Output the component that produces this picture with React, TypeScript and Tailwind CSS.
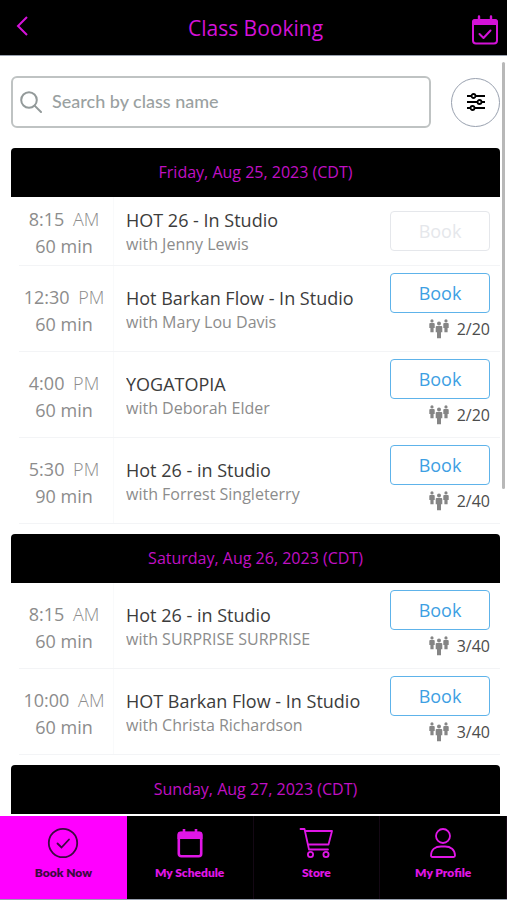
import React, { useState } from 'react';

interface ClassItem {
  id: number;
  time: string;
  period: string;
  duration: string;
  title: string;
  teacher: string;
  spots?: string;
}

interface Day {
  label: string;
  classes: ClassItem[];
}

const days: Day[] = [
  {
    label: 'Friday, Aug 25, 2023 (CDT)',
    classes: [
      { id: 1, time: '8:15', period: 'AM', duration: '60 min', title: 'HOT 26 - In Studio', teacher: 'Jenny Lewis' },
      { id: 2, time: '12:30', period: 'PM', duration: '60 min', title: 'Hot Barkan Flow - In Studio', teacher: 'Mary Lou Davis', spots: '2/20' },
      { id: 3, time: '4:00', period: 'PM', duration: '60 min', title: 'YOGATOPIA', teacher: 'Deborah Elder', spots: '2/20' },
      { id: 4, time: '5:30', period: 'PM', duration: '90 min', title: 'Hot 26 - in Studio', teacher: 'Forrest Singleterry', spots: '2/40' },
    ],
  },
  {
    label: 'Saturday, Aug 26, 2023 (CDT)',
    classes: [
      { id: 5, time: '8:15', period: 'AM', duration: '60 min', title: 'Hot 26 - in Studio', teacher: 'SURPRISE SURPRISE', spots: '3/40' },
      { id: 6, time: '10:00', period: 'AM', duration: '60 min', title: 'HOT Barkan Flow - In Studio', teacher: 'Christa Richardson', spots: '3/40' },
    ],
  },
  { label: 'Sunday, Aug 27, 2023 (CDT)', classes: [] },
];

const CalendarCheckIcon = () => (
  <svg width="28" height="32" viewBox="0 0 28 32" fill="none" stroke="currentColor" aria-hidden="true">
    <rect x="2" y="6" width="24" height="23.500" rx="3" strokeWidth="2" />
    <path d="M1 11V8a3 3 0 0 1 3-3h20a3 3 0 0 1 3 3v3z" fill="currentColor" stroke="none" />
    <path d="M8 2.500v4M20 2.500v4" strokeWidth="2.400" strokeLinecap="round" />
    <path d="M8.500 20l4 4 7-7.500" strokeWidth="2" strokeLinecap="round" strokeLinejoin="round" />
  </svg>
);

const SearchIcon = () => (
  <svg width="22" height="22" viewBox="0 0 22 22" fill="none" stroke="currentColor" strokeWidth="2" aria-hidden="true">
    <circle cx="9" cy="9" r="7.800" />
    <path d="M14.600 14.600L21 21" strokeLinecap="round" />
  </svg>
);

const FilterIcon = () => (
  <svg width="18" height="18" viewBox="0 0 18 18" fill="white" stroke="currentColor" strokeWidth="1.800" aria-hidden="true">
    <path d="M0 3h18M0 9h18M0 15h18" />
    <circle cx="6.500" cy="3" r="2" />
    <circle cx="12.500" cy="9" r="2" />
    <circle cx="5.500" cy="15" r="2" />
  </svg>
);

const PeopleIcon = () => (
  <svg width="20" height="20" viewBox="0 0 20 20" fill="currentColor" aria-hidden="true">
    <circle cx="3" cy="1.900" r="1.600" />
    <path d="M1.200 4h3.600q.9 0 .9.900v4H4.600v4.300H1.400V8.900H.3v-4q0-.9.900-.9z" />
    <circle cx="17" cy="1.900" r="1.600" />
    <path d="M15.200 4h3.600q.9 0 .9.900v4h-1.100v4.300h-3.200V8.900h-1.100v-4q0-.9.900-.9z" />
    <circle cx="10" cy="4.400" r="2" />
    <path d="M7.800 7h4.400q1.100 0 1.100 1.100v5.200H12V19.300H8v-6H6.700V8.100Q6.700 7 7.800 7z" />
  </svg>
);

const BookIcon = () => (
  <svg width="32" height="32" viewBox="0 0 32 32" fill="none" stroke="currentColor" strokeWidth="1.800" aria-hidden="true">
    <circle cx="16" cy="16" r="14.200" />
    <path d="M10.500 16.500l4 4 7.500-8" strokeLinecap="round" />
  </svg>
);

const ScheduleIcon = () => (
  <svg width="32" height="32" viewBox="0 0 32 32" fill="none" stroke="currentColor" aria-hidden="true">
    <rect x="4.800" y="6" width="22.400" height="23.200" rx="2.500" strokeWidth="2.600" />
    <path d="M3.500 12V7.500a3 3 0 0 1 3-3h19a3 3 0 0 1 3 3V12z" fill="currentColor" stroke="none" />
    <path d="M10 2v4M22 2v4" strokeWidth="2.600" />
  </svg>
);

const StoreIcon = () => (
  <svg width="34" height="32" viewBox="0 0 34 32" fill="none" stroke="currentColor" strokeWidth="1.800" strokeLinecap="round" strokeLinejoin="round" aria-hidden="true">
    <path d="M1.500 2h4l4.500 20.500h19M6.500 4h26.500l-3.500 13.500H9" />
    <circle cx="11.500" cy="27.500" r="2.600" />
    <circle cx="27" cy="27.500" r="2.600" />
  </svg>
);

const ProfileIcon = () => (
  <svg width="32" height="32" viewBox="0 0 32 32" fill="none" stroke="currentColor" strokeWidth="1.800" aria-hidden="true">
    <circle cx="16" cy="9" r="7" />
    <path d="M4 28.500c0-6 4.500-9 10-9h4c5.500 0 10 3 10 9q0 1.500-1.500 1.500h-21Q4 30 4 28.500z" />
  </svg>
);

const tabs = [
  { name: 'Book Now', icon: <BookIcon /> },
  { name: 'My Schedule', icon: <ScheduleIcon /> },
  { name: 'Store', icon: <StoreIcon /> },
  { name: 'My Profile', icon: <ProfileIcon /> },
];

const ClassRow: React.FC<{ item: ClassItem }> = ({ item }) => (
  <li className="ml-2 flex items-stretch border-b border-gray-100">
    <div className="flex w-[95px] shrink-0 flex-col justify-center border-r border-gray-50 pt-1 pr-1 text-center text-lg leading-[27px] text-[#8c8c8c]">
      <div className="whitespace-nowrap">
        {item.time} <span className="ml-1 font-light">{item.period}</span>
      </div>
      <div>{item.duration}</div>
    </div>
    <div className="flex min-w-0 flex-1 flex-col justify-center pt-0.5 pl-3">
      <h3 className="truncate text-lg leading-6 text-[#3c3c3c]">{item.title}</h3>
      <p className="truncate text-base leading-6 text-[#8c8c8c]">with {item.teacher}</p>
    </div>
    <div className={item.spots ? 'w-[110px] shrink-0 pt-[7px] pr-2.5 pb-2' : 'w-[110px] shrink-0 py-3.5 pr-2.5'}>
      <button
        disabled={!item.spots}
        className="block h-10 w-full rounded border border-[#5eb3ea] text-lg text-[#3d9fe3] disabled:border-gray-200 disabled:text-gray-200"
      >
        Book
      </button>
      {item.spots && (
        <div className="mt-1 flex h-[26px] items-center justify-end gap-2 pb-0.5 text-base text-[#4c4c4c]">
          <span className="text-[#858585]"><PeopleIcon /></span>
          {item.spots}
        </div>
      )}
    </div>
  </li>
);

const App: React.FC = () => {
  const [query, setQuery] = useState('');
  const [activeTab, setActiveTab] = useState('Book Now');

  return (
    <div className="flex h-screen flex-col bg-white font-['Open_Sans',sans-serif]">
      <header className="grid h-14 shrink-0 grid-cols-[44px_1fr_40px] items-center border-b border-gray-400 bg-black text-[#d412d8]">
        <button aria-label="Back" className="flex justify-center pb-1">
          <svg width="12" height="20" viewBox="0 0 12 20" fill="none" stroke="currentColor" strokeWidth="2" aria-hidden="true">
            <path d="M11 1L2 10l9 9" />
          </svg>
        </button>
        <h1 className="pt-0.5 text-center text-[21px]">Class Booking</h1>
        <button aria-label="My bookings" className="flex pt-1 pl-1">
          <CalendarCheckIcon />
        </button>
      </header>

      <main className="relative min-h-0 flex-1 overflow-hidden pr-[7px] pl-[11px]">
        <div className="flex items-center gap-5 pt-5 pb-5">
          <label className="flex h-[52px] min-w-0 flex-1 items-center gap-2.5 rounded-md border-2 border-[#bfc3c3] pl-[7px] text-[#939a9a]">
            <SearchIcon />
            <input
              type="text"
              aria-label="Search by class name"
              placeholder="Search by class name"
              value={query}
              onChange={(e) => setQuery(e.target.value)}
              className="min-w-0 flex-1 pb-0.5 font-['Lato',sans-serif] text-lg font-medium outline-none placeholder:text-[#9aa1a1]"
            />
          </label>
          <button
            aria-label="Filters"
            className="flex size-[49px] items-center justify-center rounded-full border border-gray-400 text-black"
          >
            <FilterIcon />
          </button>
        </div>

        {days.map((day) => (
          <section key={day.label} className="mb-2.5">
            <h2 className="rounded-t bg-black text-center text-base leading-[49px] text-[#c010c4]">{day.label}</h2>
            <ul>
              {day.classes
                .filter((c) => c.title.toLowerCase().includes(query.toLowerCase()))
                .map((c) => (
                  <ClassRow key={c.id} item={c} />
                ))}
            </ul>
          </section>
        ))}

        {/* scroll indicator */}
        <div className="absolute top-1.5 right-0.5 h-[427px] w-[3px] rounded-full bg-[#b8b8b8]" />
      </main>

      <nav className="grid h-[84px] shrink-0 grid-cols-4 border-b border-gray-400 bg-black font-['Lato',sans-serif]">
        {tabs.map((tab) => (
          <button
            key={tab.name}
            onClick={() => setActiveTab(tab.name)}
            className={
              activeTab === tab.name
                ? 'flex flex-col items-center bg-[#ff00ff] pt-[11px] text-[#3b0a3f]'
                : 'flex flex-col items-center border-r border-[#140814] pt-[11px] text-[#e016e6]'
            }
          >
            {tab.icon}
            <span className="mt-1 text-xs leading-5 font-extrabold">{tab.name}</span>
          </button>
        ))}
      </nav>
    </div>
  );
};

export default App;
